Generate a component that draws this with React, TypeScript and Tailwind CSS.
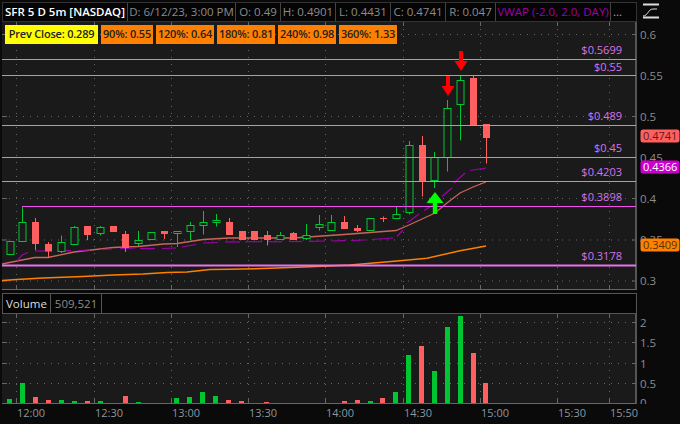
const GREEN = "#00c632";
const RED = "#ff5f5f";
const GRID_X = [16, 94, 171, 248, 325, 403, 480, 557, 609];
const PRICE_Y = [34.5, 75.5, 116.5, 157.5, 198.5, 240, 281];

// x, body top, body bottom, wick top, wick bottom, up
const candles: [number, number, number, number, number, boolean][] = [
  [10, 241.5, 254.5, 241.5, 254.5, true],
  [22, 222.5, 241.5, 206.5, 241.5, true],
  [35, 222, 244, 218, 250, false],
  [48, 244, 251.5, 242, 258, false],
  [61, 242.5, 251.5, 235.5, 253, true],
  [74, 227.5, 244.5, 226, 244.5, true],
  [87, 226, 235, 226, 240, false],
  [100, 227.5, 233.5, 226, 235.5, true],
  [113, 226, 232, 226, 232, false],
  [125, 234, 248, 231, 252, false],
  [138, 240.5, 243.5, 231, 246, true],
  [151, 232.5, 239.5, 232.5, 239.5, true],
  [164, 231, 234, 231, 239, false],
  [177, 231.5, 233.5, 231.5, 247, true],
  [190, 225.5, 231.5, 222, 240, true],
  [203, 222.5, 225.5, 211, 234.5, true],
  [216, 220.5, 222.5, 214, 226.5, true],
  [229, 222, 235, 218, 235, false],
  [242, 231, 240, 231, 240, false],
  [254, 231, 240, 231, 240, false],
  [267, 235, 240, 231, 245.5, false],
  [280, 235.5, 239.5, 232, 240, true],
  [293, 233, 240, 232, 240, false],
  [306, 235.5, 238.5, 224, 240, true],
  [319, 224.5, 227.5, 215, 230.5, true],
  [331, 222.5, 230.5, 215, 230.5, true],
  [344, 222, 229, 216, 229, false],
  [357, 228, 231, 225, 232, false],
  [370, 218.5, 230.5, 218.5, 230.5, true],
  [383, 218, 219, 216.5, 222, false],
  [396, 214.5, 218.5, 207, 218.5, true],
  [409, 145.5, 212.5, 141, 214.5, true],
  [422, 145, 181, 136, 196.5, false],
  [434, 157.5, 180.5, 152, 188, true],
  [447, 108.5, 157.5, 100, 171.5, true],
  [460, 80.5, 104.5, 76, 140.5, true],
  [473, 78, 125, 76, 125, false],
  [486, 124, 138, 124, 163.5, false],
];

// x, top, up
const volumes: [number, number, boolean][] = [
  [9, 399, true], [22, 383, true], [35, 397, false], [48, 400, false],
  [61, 400, true], [74, 401, true], [87, 401, false], [100, 401, true],
  [125, 396, false], [138, 402, true], [176, 398, true], [189, 397, true],
  [202, 392, true], [215, 396, true], [228, 400, false], [241, 401, false],
  [266, 402, false], [344, 401, false], [357, 400, false], [370, 401, true],
  [382, 398, false], [395, 392, true], [408, 355, true], [421, 346, false],
  [434, 371, true], [447, 327, true], [460, 316, true], [473, 353, false],
  [485, 383, false],
];

const levels = [
  { y: 59.5, label: "$0.5699", ly: 54 },
  { y: 75.5, label: "$0.55", ly: 70.5 },
  { y: 125.5, label: "$0.489", ly: 120 },
  { y: 157.5, label: "$0.45", ly: 152 },
  { y: 181.5, label: "$0.4203", ly: 176 },
  { y: 206.5, label: "$0.3898", ly: 201 },
  { y: 265.5, label: "$0.3178", ly: 260 },
];

const ema = "2,264 17,261 35,257.5 48,257.5 74,252 100,249 113,247.5 125,247 138,246.5 164,244 177,243.5 203,239.5 229,238 254,238 293,238 344,234.5 396,230.5 409,225 422,219 435,213 447,203 460,193 473,187 486,182";
const orange = "2,280.5 17,279.5 43,278 83,276.5 113,275 143,274 167,272.5 187,272 210,269.5 230,269.3 270,268.3 310,266.7 350,265 397,261 427,258.3 460,250.7 486,246";
const vwap = [
  "17,261 22,255 28,252.5", "35,251 48,251", "57,250.5 71,250.5", "78,250.5 90,250",
  "100,249.5 112,249", "120,248.7 135,248", "140,248.5 155,248.5", "162,248.5 176,248",
  "182,247 196,244.5", "203,243 218,242.5", "225,242 240,242", "245,241.7 262,241.7",
  "268,241.7 282,241.7", "289,241.5 302,241.5", "309,241.3 325,241", "332,241 345,240.7",
  "351,240.5 365,240", "372,239.5 393,238", "397,236.5 403,230", "407,223 419,214",
  "424,210.5 435,204", "442,196.5 452,188", "454,183 465,173", "470,170.5 486,168",
];

const headerCells = [
  { text: "D: 6/12/23, 3:00 PM", w: "w-[108px]" },
  { text: "O: 0.49", w: "w-[45px]" },
  { text: "H: 0.4901", w: "w-[55px]" },
  { text: "L: 0.4431", w: "w-[55px]" },
  { text: "C: 0.4741", w: "w-[55px]" },
  { text: "R: 0.047", w: "w-[50px]" },
];

const badges = [
  { text: "90%: 0.55", w: "w-[52px]" },
  { text: "120%: 0.64", w: "w-[58px]" },
  { text: "180%: 0.81", w: "w-[58px]" },
  { text: "240%: 0.98", w: "w-[58px]" },
  { text: "360%: 1.33", w: "w-[58px]" },
];

function Grid({ top, bottom, ys }: { top: number; bottom: number; ys: number[] }) {
  return (
    <g>
      {GRID_X.map((x) => (
        <g key={x}>
          <line x1={x + 0.5} x2={x + 0.5} y1={top} y2={bottom} stroke="#666" strokeDasharray="1 6" />
          <line x1={x + 0.5} x2={x + 0.5} y1={top} y2={top + 4} stroke="#666" />
          <line x1={x + 0.5} x2={x + 0.5} y1={bottom - 4} y2={bottom} stroke="#666" />
        </g>
      ))}
      {ys.map((y) => (
        <g key={y}>
          <line x1={2} x2={636} y1={y} y2={y} stroke="#666" strokeDasharray="1 6" />
          <line x1={2} x2={7} y1={y} y2={y} stroke="#666" />
          <line x1={632} x2={636} y1={y} y2={y} stroke="#666" />
        </g>
      ))}
    </g>
  );
}

function PriceChart() {
  return (
    <svg width={636} height={268} viewBox="2 22 636 268" className="block">
      <Grid top={22} bottom={289} ys={PRICE_Y} />
      <line x1={2} x2={636} y1={289.5} y2={289.5} stroke="#666" />
      <polyline points={orange} fill="none" stroke="#ff8000" strokeWidth={1.5} />
      <polyline points={ema} fill="none" stroke="#c8665a" strokeWidth={1.3} />
      {vwap.map((p) => (
        <polyline key={p} points={p} fill="none" stroke="#a000ac" strokeWidth={1.2} />
      ))}
      {candles.map(([x, top, bot, wt, wb, up]) => (
        <g key={x}>
          <line x1={x + 0.5} x2={x + 0.5} y1={wt} y2={wb} stroke={up ? GREEN : RED} />
          {up ? (
            <rect x={x - 3} y={top} width={7} height={bot - top} fill="#1a1a1a" stroke={GREEN} />
          ) : (
            <rect x={x - 3} y={top} width={7} height={bot - top} fill={RED} />
          )}
        </g>
      ))}
      {levels.map((l) => (
        <line
          key={l.label}
          x1={l.y === 206.5 ? 22 : 2}
          x2={636}
          y1={l.y}
          y2={l.y}
          stroke={l.y === 206.5 ? "#f050f0" : "#e873e8"}
          strokeWidth={l.y === 265.5 ? 2 : 1}
        />
      ))}
      {levels.map((l) => (
        <text key={l.label} x={622} y={l.ly} textAnchor="end" fontSize={11} fill="#d672f0">
          {l.label}
        </text>
      ))}
      <path d="M459 51h4v10h4.5l-6.5 10-6.5-10h4.5z" fill="#ff0000" />
      <path d="M446 76h4v10h4.5l-6.5 10-6.5-10h4.5z" fill="#ff0000" />
      <path d="M435 192l8.5 11h-6.3v11h-4.4v-11h-6.3z" fill="#00ff00" />
    </svg>
  );
}

function PriceAxis() {
  const labels = [
    ["0.6", 39], ["0.55", 80], ["0.5", 121], ["0.45", 162], ["0.4", 203], ["0.35", 244], ["0.3", 285],
  ] as const;
  return (
    <svg width={43} height={268} viewBox="637 22 43 268" className="block">
      {labels.map(([t, y]) => (
        <text key={t} x={640} y={y} fontSize={11.5} fill="#8c8c8c">
          {t}
        </text>
      ))}
      <rect x={640.5} y={129.5} width={39} height={13} rx={2.5} fill={RED} />
      <text x={643} y={140} fontSize={11} fill="#5a1a1a">0.4741</text>
      <rect x={640.5} y={160.5} width={39} height={13} rx={2.5} fill="#cc00cc" />
      <text x={643} y={171} fontSize={11} fill="#ffffff">0.4366</text>
      <rect x={640.5} y={238.5} width={39} height={13} rx={2.5} fill="#ff8000" />
      <text x={643} y={249} fontSize={11} fill="#5a3000">0.3409</text>
    </svg>
  );
}

function VolumeChart() {
  return (
    <svg width={636} height={90} viewBox="2 314 636 90" className="block">
      <Grid top={314} bottom={403} ys={[322.5, 342.5, 363.5, 383.5]} />
      <line x1={2} x2={636} y1={403.5} y2={403.5} stroke="#666" />
      {volumes.map(([x, top, up]) => (
        <rect key={x} x={x - 2} y={top} width={5} height={403 - top} fill={up ? GREEN : RED} />
      ))}
    </svg>
  );
}

function VolumeAxis() {
  const labels = [["2", 327], ["1.5", 347], ["1", 368], ["0.5", 388], ["0", 407]] as const;
  return (
    <svg width={43} height={90} viewBox="637 314 43 90" className="block">
      {labels.map(([t, y]) => (
        <text key={t} x={640} y={y} fontSize={11.5} fill="#8c8c8c">
          {t}
        </text>
      ))}
    </svg>
  );
}

export default function App() {
  return (
    <div className="flex h-[424px] w-[680px] flex-col overflow-hidden bg-[#0a0a0a] font-['Open_Sans',sans-serif] text-[11.5px] text-[#8c8c8c]">
      <div className="flex">
        <div className="mt-[2px] ml-[2px] flex h-[20px] w-[635px] items-center border border-[#333] bg-[#050505] leading-none">
          <div className="flex h-full w-[125px] shrink-0 items-center justify-center border-r border-[#444] font-semibold whitespace-nowrap text-white">
            SFR 5 D 5m [NASDAQ]
          </div>
          {headerCells.map((c) => (
            <div key={c.text} className={`flex h-full ${c.w} shrink-0 items-center justify-center border-r border-[#444] whitespace-nowrap`}>
              {c.text}
            </div>
          ))}
          <div className="flex h-full w-[115px] shrink-0 items-center justify-center border-r border-[#444] whitespace-nowrap text-[#a000a8]">
            VWAP (-2.0, 2.0, DAY)
          </div>
          <div className="pl-[2px] text-[#aaa]">...</div>
        </div>
        <svg width={22} height={20} viewBox="0 0 22 20" className="mt-[1px] ml-[4px]">
          <path d="M2 3.5h16M2 16.5h16" stroke="#ddd" strokeWidth={2} fill="none" />
          <path d="M2 15c5 0 5-7 10-7h4" stroke="#ddd" fill="none" />
        </svg>
      </div>

      <div className="relative flex h-[268px]">
        <div className="ml-[2px] w-[635px] shrink-0 border-r-2 border-[#555] bg-[#1a1a1a]">
          <PriceChart />
        </div>
        <PriceAxis />
        <div className="absolute top-[3px] left-[5px] flex gap-[3px] text-[11px] font-semibold tracking-[-0.2px] text-[#222]">
          <div className="flex h-[19px] w-[93px] items-center justify-center bg-[#ffff00] whitespace-nowrap">Prev Close: 0.289</div>
          {badges.map((b) => (
            <div key={b.text} className={`flex h-[19px] ${b.w} items-center justify-center bg-[#ff8000] whitespace-nowrap`}>
              {b.text}
            </div>
          ))}
        </div>
      </div>

      <div className="mt-[3px] ml-[2px] flex h-[21px] w-[635px] border border-[#555] bg-[#050505]">
        <div className="flex items-center border-r border-[#555] px-[3px] text-[#ddd]">Volume</div>
        <div className="flex items-center border-r border-[#555] px-[4px]">509,521</div>
      </div>

      <div className="flex h-[90px]">
        <div className="ml-[2px] w-[635px] shrink-0 border-r-2 border-[#555] bg-[#1a1a1a]">
          <VolumeChart />
        </div>
        <VolumeAxis />
      </div>

      <div className="relative h-[20px] text-[11px] text-[#8a96a0]">
        {["12:00", "12:30", "13:00", "13:30", "14:00", "14:30", "15:00", "15:30", "15:50"].map((t, i) => (
          <span key={t} className="absolute top-[1px]" style={{ left: GRID_X[i] + 1 }}>
            {t}
          </span>
        ))}
      </div>
    </div>
  );
}
